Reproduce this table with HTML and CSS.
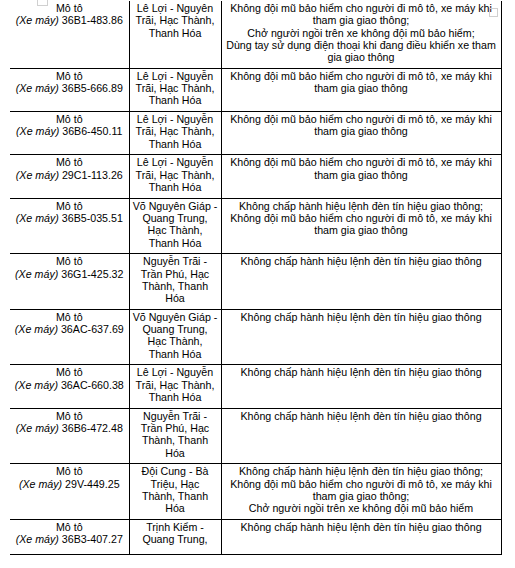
FILE: index.html
```html
<!DOCTYPE html>
<html lang="vi">
<head>
<meta charset="utf-8">
<title>Danh sách vi phạm</title>
<link rel="stylesheet" href="styles.css">
</head>
<body>
<div class="page">
<span class="mark mark-a"></span>
<span class="mark mark-b"></span>
<table class="list">
<colgroup><col class="c1"><col class="c2"><col class="c3"></colgroup>
<tbody>
<tr>
<td>Mô tô<br><i>(Xe máy)</i> 36B1-483.86</td>
<td>Lê Lợi - Nguyên<br>Trãi, Hạc Thành,<br>Thanh Hóa</td>
<td>Không đội mũ bảo hiểm cho người đi mô tô, xe máy khi<br>tham gia giao thông;<br>Chở người ngồi trên xe không đội mũ bảo hiểm;<br>Dùng tay sử dụng điện thoại khi đang điều khiển xe tham<br>gia giao thông</td>
</tr>
<tr>
<td>Mô tô<br><i>(Xe máy)</i> 36B5-666.89</td>
<td>Lê Lợi - Nguyễn<br>Trãi, Hạc Thành,<br>Thanh Hóa</td>
<td>Không đội mũ bảo hiểm cho người đi mô tô, xe máy khi<br>tham gia giao thông</td>
</tr>
<tr>
<td>Mô tô<br><i>(Xe máy)</i> 36B6-450.11</td>
<td>Lê Lợi - Nguyễn<br>Trãi, Hạc Thành,<br>Thanh Hóa</td>
<td>Không đội mũ bảo hiểm cho người đi mô tô, xe máy khi<br>tham gia giao thông</td>
</tr>
<tr>
<td>Mô tô<br><i>(Xe máy)</i> 29C1-113.26</td>
<td>Lê Lợi - Nguyễn<br>Trãi, Hạc Thành,<br>Thanh Hóa</td>
<td>Không đội mũ bảo hiểm cho người đi mô tô, xe máy khi<br>tham gia giao thông</td>
</tr>
<tr>
<td>Mô tô<br><i>(Xe máy)</i> 36B5-035.51</td>
<td>Võ Nguyên Giáp -<br>Quang Trung,<br>Hạc Thành,<br>Thanh Hóa</td>
<td>Không chấp hành hiệu lệnh đèn tín hiệu giao thông;<br>Không đội mũ bảo hiểm cho người đi mô tô, xe máy khi<br>tham gia giao thông</td>
</tr>
<tr>
<td>Mô tô<br><i>(Xe máy)</i> 36G1-425.32</td>
<td>Nguyễn Trãi -<br>Trần Phú, Hạc<br>Thành, Thanh<br>Hóa</td>
<td>Không chấp hành hiệu lệnh đèn tín hiệu giao thông</td>
</tr>
<tr>
<td>Mô tô<br><i>(Xe máy)</i> 36AC-637.69</td>
<td>Võ Nguyên Giáp -<br>Quang Trung,<br>Hạc Thành,<br>Thanh Hóa</td>
<td>Không chấp hành hiệu lệnh đèn tín hiệu giao thông</td>
</tr>
<tr>
<td>Mô tô<br><i>(Xe máy)</i> 36AC-660.38</td>
<td>Lê Lợi - Nguyễn<br>Trãi, Hạc Thành,<br>Thanh Hóa</td>
<td>Không chấp hành hiệu lệnh đèn tín hiệu giao thông</td>
</tr>
<tr>
<td>Mô tô<br><i>(Xe máy)</i> 36B6-472.48</td>
<td>Nguyễn Trãi -<br>Trần Phú, Hạc<br>Thành, Thanh<br>Hóa</td>
<td>Không chấp hành hiệu lệnh đèn tín hiệu giao thông</td>
</tr>
<tr>
<td>Mô tô<br><i>(Xe máy)</i> 29V-449.25</td>
<td>Đội Cung - Bà<br>Triệu, Hạc<br>Thành, Thanh<br>Hóa</td>
<td>Không chấp hành hiệu lệnh đèn tín hiệu giao thông;<br>Không đội mũ bảo hiểm cho người đi mô tô, xe máy khi<br>tham gia giao thông;<br>Chở người ngồi trên xe không đội mũ bảo hiểm</td>
</tr>
<tr class="last">
<td>Mô tô<br><i>(Xe máy)</i> 36B3-407.27</td>
<td>Trịnh Kiểm -<br>Quang Trung,</td>
<td>Không chấp hành hiệu lệnh đèn tín hiệu giao thông</td>
</tr>
</tbody>
</table>
</div>
</body>
</html>
```
FILE: styles.css
```css
html, body {
  margin: 0;
  padding: 0;
  background: #fff;
}

.page {
  position: relative;
  padding: 1px 0 0 10px;
  font-family: "Liberation Sans", Arial, sans-serif;
  font-size: 10.67px;
  line-height: 12.27px;
  color: #000;
}

.list {
  border-collapse: collapse;
  table-layout: fixed;
  width: 491px;
}

.c1 { width: 119px; }
.c2 { width: 92px; }
.c3 { width: 280px; }

.list td {
  padding: 1px 0 4.5px 0;
  text-align: center;
  vertical-align: top;
  white-space: nowrap;
  border-bottom: 1px solid #000;
  border-left: 1px solid #000;
  border-right: 1px solid #000;
}

.list td:first-child {
  border-left: none;
}

.list tr.last td {
  height: 29px;
}

.list i {
  font-style: italic;
}

.mark {
  position: absolute;
  border: 1px solid #d0d0d0;
}

.mark-a {
  left: 37px;
  top: -2px;
  width: 9px;
  height: 6px;
}

.mark-b {
  left: 489px;
  top: 8px;
  width: 7px;
  height: 7px;
}
```
